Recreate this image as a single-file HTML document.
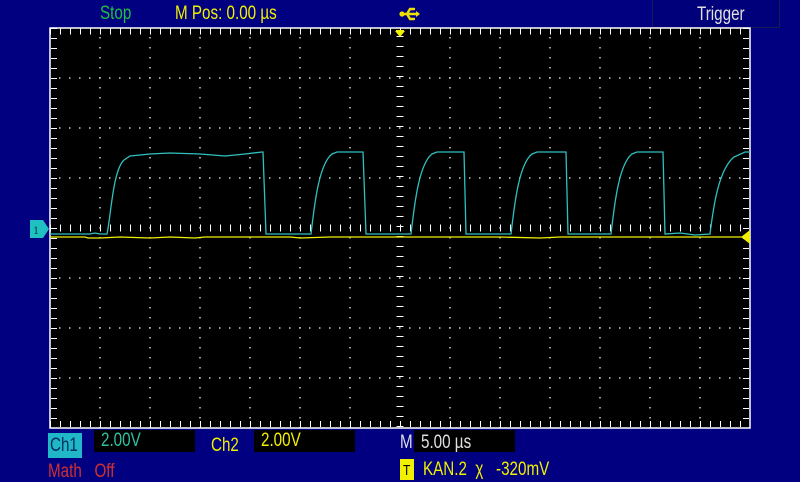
<!DOCTYPE html>
<html><head><meta charset="utf-8"><style>
html,body{margin:0;padding:0}
body{width:800px;height:480px;background:#000080;position:relative;overflow:hidden;font-family:"Liberation Sans",sans-serif}
.t{position:absolute;font-size:19px;line-height:20px;transform:scaleX(0.8);transform-origin:0 0;white-space:nowrap}
.b{position:absolute;background:#000}
</style></head><body>
<div class="t" style="left:100px;top:4px;color:#20c040">Stop</div>
<div class="t" style="left:175px;top:4px;color:#f0f000">M Pos: 0.00 &micro;s</div>
<div style="position:absolute;left:652px;top:-1px;width:126px;height:27px;border:1px solid #1a1a50;background:#00007a"></div>
<div class="t" style="left:697px;top:5px;color:#e0e0e0">Trigger</div>
<svg style="position:absolute;left:398px;top:6px" width="24" height="16" viewBox="0 0 24 16">
<g stroke="#f0e000" stroke-width="2.4" fill="none" stroke-linecap="round"><path d="M4 8H20M9 8L12 3H16M9 8L12 13H16"/></g>
<circle cx="4" cy="8" r="2.6" fill="#f0e000"/><path d="M18 5L22 8L18 11Z" fill="#f0e000"/>
</svg>
<svg style="position:absolute;left:0;top:0" width="800" height="480">
<rect x="50" y="28" width="700" height="400" fill="#000"/>
<g stroke="#fff" stroke-width="1">
<line x1="50" y1="31.5" x2="750" y2="31.5" stroke-width="6" stroke-dasharray="1 9" stroke-dashoffset="-10"/>
<line x1="50" y1="424" x2="750" y2="424" stroke-width="6" stroke-dasharray="1 9" stroke-dashoffset="-10"/>
<line x1="54" y1="28" x2="54" y2="428" stroke-width="6" stroke-dasharray="1 9" stroke-dashoffset="-10"/>
<line x1="746" y1="28" x2="746" y2="428" stroke-width="6" stroke-dasharray="1 9" stroke-dashoffset="-10"/>
<line x1="50" y1="228" x2="750" y2="228" stroke-width="7" stroke-dasharray="1 9" stroke-dashoffset="-10"/>
<line x1="400" y1="28" x2="400" y2="428" stroke-width="7" stroke-dasharray="1 9" stroke-dashoffset="-8"/>
</g>
<g stroke="#ccc" stroke-width="1.5" stroke-dasharray="1.5 8.5" stroke-dashoffset="-9">
<path d="M100 28V428M150 28V428M200 28V428M250 28V428M300 28V428M350 28V428M450 28V428M500 28V428M550 28V428M600 28V428M650 28V428M700 28V428"/>
<path d="M50 78H750M50 128H750M50 178H750M50 278H750M50 328H750M50 378H750"/>
</g>
<rect x="50" y="28" width="700" height="400" fill="none" stroke="#fff" stroke-width="1.5"/>
<polyline fill="none" stroke="#f0f000" stroke-width="1.3" points="50,237 85,237 88,238 100,238 120,237 150,238 170,237 195,238 205,237 240,237 290,237 300,238 330,237 500,237 540,238 560,237 620,237 650,237 700,237 745,237"/>
<path fill="none" stroke="#30c0c0" stroke-width="1.3" d="M50,234 L90,234 L95,233 L100,234 L107,234 C111,215 113,170 124,160 L130,156 L150,154 L170,153 L200,154 L225,156 L245,154 L262,152 L263,152 L266,234 L311,234 C314,210 318,165 332,154 L337,152 L363,152 L366,234 L411,234 C414,210 418,165 432,154 L437,152 L464,152 L466,234 L511,234 C514,210 518,165 532,154 L537,152 L566,152 L568,234 L611,234 C614,210 618,165 632,154 L637,152 L663,152 L665,234 L680,233 L695,235 L710,234 C713,210 718,170 734,157 L745,152 L750,152"/>
<path d="M30,220 L43,220 L49,229 L43,238 L30,238Z" fill="#20c0c0"/>
<text x="33" y="234" font-size="12" fill="#004040" font-family="Liberation Serif">1</text>
<path d="M750,230 L741,237 L750,244Z" fill="#f0f000"/>
<path d="M395,31 L405,31 L400,37Z" fill="#f0f000"/><rect x="396" y="30" width="8" height="1.5" fill="#f0f000"/>
</svg>
<div style="position:absolute;left:48px;top:433px;width:34px;height:25px;background:#20b8c8"></div>
<div class="t" style="left:50px;top:436px;color:#003060">Ch1</div>
<div class="b" style="left:94px;top:430px;width:101px;height:22px"></div>
<div class="t" style="left:101px;top:431px;color:#30c0a0">2.00V</div>
<div class="t" style="left:211px;top:436px;color:#f0f000">Ch2</div>
<div class="b" style="left:254px;top:430px;width:101px;height:22px"></div>
<div class="t" style="left:261px;top:431px;color:#f0f000">2.00V</div>
<div class="t" style="left:400px;top:433px;color:#e0e0e0">M</div>
<div class="b" style="left:414px;top:430px;width:101px;height:22px"></div>
<div class="t" style="left:421px;top:433px;color:#e0e0e0">5.00 &micro;s</div>
<div class="t" style="left:48px;top:462px;color:#d03030">Math&nbsp;&nbsp;&nbsp;Off</div>
<div style="position:absolute;left:400px;top:459px;width:14px;height:21px;background:#f0f000"></div>
<div class="t" style="left:403px;top:461px;color:#000;font-size:15px">T</div>
<div class="t" style="left:423px;top:460px;color:#f0f000">KAN.2 &nbsp;&#x3c7;&nbsp; &nbsp;-320mV</div>
</body></html>
